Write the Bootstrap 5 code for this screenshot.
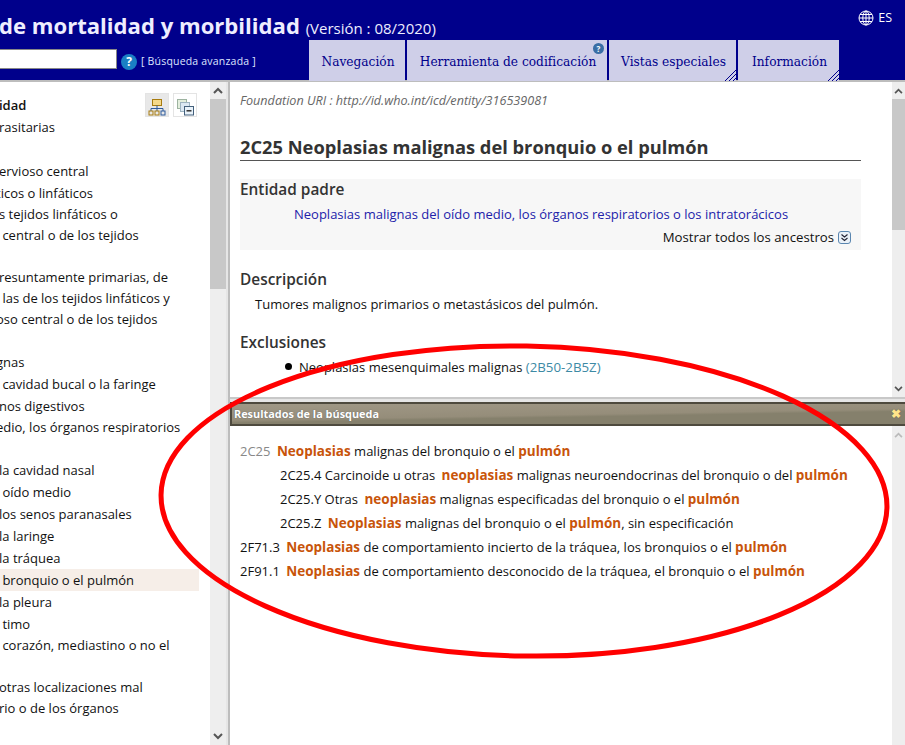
<!DOCTYPE html>
<html lang="es">
<head>
    <meta charset="UTF-8">
    <meta name="viewport" content="width=device-width, initial-scale=1.0">
    <title>CIE-11 para estadísticas de mortalidad y morbilidad</title>
    <link href="https://cdn.jsdelivr.net/npm/bootstrap@5.3.0/dist/css/bootstrap.min.css" rel="stylesheet">
    <style>
        html, body { height: 100%; overflow: hidden; }
        body { font-family: "Open Sans", "Noto Sans", sans-serif; font-size: 13px; color: #111; background: #fff; }
        .app-shell { width: 905px; height: 745px; position: relative; overflow: hidden; }

        .top-bar { height: 80px; background: #00008b; color: #fff; }
        .title-row { height: 40px; padding-top: 8px; padding-right: 13px; }
        .app-title { font-size: 22.1px; font-weight: 700; margin: 0 0 0 -1px; color: #eef; white-space: nowrap; line-height: 34px; }
        .app-version { font-size: 15px; font-weight: 400; margin-left: 0; }
        .lang-pick { font-size: 12.5px; line-height: 18px; margin-top: 1px; }
        .search-input { width: 117px; height: 20px; background: #fff; border: 1px solid #888; border-left: 0; }
        .help-dot { width: 16px; height: 16px; border-radius: 50%; background: #1a7fc4; color: #fff; font-weight: 700; font-size: 12px; line-height: 16px; text-align: center; margin: 5px 0 0 4px; }
        .adv-link { font-size: 10.5px; letter-spacing: .2px; margin: 5px 0 0 4px; color: #dfe6ff; }
        .tab-row { height: 40px; }
        .tab-item { height: 41px; background: #cfcfe8; color: #00008b; font-family: "DejaVu Serif", serif; font-size: 12.2px; position: relative; margin-right: 2px; display: flex; align-items: center; justify-content: center; padding: 3px 0 0 2px; white-space: nowrap; }
        .tab-nav { width: 96px; margin-left: 309px; }
        .tab-cod { width: 200px; }
        .tab-views { width: 127px; }
        .tab-info { width: 101px; margin-right: 0; }
        .tab-corner { position: absolute; right: 0; bottom: 0; }
        .tab-help { position: absolute; right: 3px; top: 3px; width: 11px; height: 11px; border-radius: 50%; background: #3a6ea5; color: #fff; font: 700 8px/11px "Open Sans", sans-serif; text-align: center; }

        .main-area { height: 665px; border-top: 2px solid #bdbdbd; }
        .tree-pane { width: 226px; }
        .tree-list { width: 210px; position: relative; padding-top: 12px; overflow: hidden; }
        .tree-row { height: 22px; line-height: 22px; white-space: nowrap; margin-left: -1px; }
        .tree-tight { height: 21px; }
        .tree-cut { margin-left: -4px; }
        .tree-sel { background: #f6eee8; width: 200px; }
        .tree-tools { position: absolute; left: 145px; top: 11px; }
        .tool-btn { width: 24px; height: 24px; border: 1px solid #e4e4e4; padding: 2px; display: block; }
        .tool-on { background: #e8e8e8; }
        .scroll-track { width: 16px; background: #eee; flex: none; }
        .scroll-thin { width: 13px; }
        .scroll-end { height: 17px; display: flex; align-items: center; justify-content: center; }
        .scroll-thumb { background: #c8c8c8; }
        .scroll-gap { flex: 1; }
        .split-v { width: 4px; background: #e6e6e6; border-right: 2px solid #bdbdbd; flex: none; }

        .detail-pane { height: 315px; }
        .detail-body { width: 662px; padding: 11px 0 0 10px; position: relative; overflow: hidden; }
        .found-uri { font-style: italic; color: #666; font-size: 12.6px; line-height: 16px; }
        .ent-title { font-size: 18.3px; font-weight: 700; color: #333; margin: 26px 0 0; padding-bottom: 2px; border-bottom: 1px solid #555; width: 621px; line-height: 23px; }
        .parent-box { background: #f7f7f7; width: 621px; height: 71px; margin-top: 18px; }
        .sect-head { font-size: 15.4px; font-weight: 600; color: #333; line-height: 20px; }
        .parent-box .sect-head { padding-top: 1px; }
        .parent-link { color: #2222aa; padding-left: 54px; line-height: 20px; margin-top: 4px; }
        .anc-line { line-height: 18px; margin-top: 4px; padding-right: 10px; font-size: 13.2px; }
        .desc-text { padding-left: 15px; margin-top: 4px; line-height: 20px; }
        .bullet-line { padding-left: 59px; line-height: 20px; margin-top: 4px; position: relative; }
        .bullet-line::before { content: ""; position: absolute; left: 45px; top: 6px; width: 7px; height: 7px; background: #000; border-radius: 50%; }
        .code-ref { color: #3d8aa5; font-size: 13.3px; }

        .split-h { height: 5px; background: #e6e6e6; border-top: 2px solid #c8c8c8; }
        .result-bar { height: 24px; background: linear-gradient(179deg, #a09886 0%, #958d7a 52%, #85806c 60%, #85806c 100%); border-top: 2px solid #4e4a3e; border-bottom: 2px solid #4e4a3e; border-left: 2px solid #4e4a3e; color: #fff; font-weight: 700; font-size: 10.9px; line-height: 20px; padding-left: 2px; text-shadow: 0 0 1px #555; }
        .close-x { color: #ffe58a; font-size: 12px; font-weight: 700; margin-right: 4px; }
        .result-pane { height: 319px; }
        .result-body { width: 662px; padding: 13px 0 0 10px; white-space: nowrap; }
        .res-row { line-height: 24px; height: 24px; }
        .res-sub { padding-left: 40px; }
        .res-code { margin-right: 3px; }
        .res-dim { color: #888; }
        .hit { color: #c8540a; font-weight: 700; font-size: 13.5px; }

        .oval-mark { position: absolute; left: 155px; top: 340px; pointer-events: none; }
    </style>
</head>
<body>
<div class="app-shell">
    <div class="top-bar">
        <div class="title-row d-flex justify-content-between">
            <h1 class="app-title">de mortalidad y morbilidad <span class="app-version">(Versión : 08/2020)</span></h1>
            <div class="lang-pick d-flex align-items-center gap-1 align-self-start">
                <svg width="16" height="16" viewBox="0 0 16 16" fill="none" stroke="#fff" stroke-width="1"><circle cx="8" cy="8" r="7"/><ellipse cx="8" cy="8" rx="3.2" ry="7"/><path d="M8 1v14M1 8h14M2 4.5h12M2 11.5h12"/></svg>
                <span>ES</span>
            </div>
        </div>
        <div class="tab-row d-flex position-relative">
            <div class="position-absolute top-0 start-0 d-flex align-items-center" style="height:20px;margin-top:9px">
                <div class="search-input"></div>
                <div class="help-dot">?</div>
                <div class="adv-link">[ Búsqueda avanzada ]</div>
            </div>
            <div class="tab-item tab-nav">Navegación</div>
            <div class="tab-item tab-cod">Herramienta de codificación<span class="tab-help">?</span></div>
            <div class="tab-item tab-views">Vistas especiales
                <svg class="tab-corner" width="12" height="12" viewBox="0 0 12 12" stroke="#00008b" stroke-width="1"><path d="M1 12 12 1M5 12l7-7M9 12l3-3"/></svg></div>
            <div class="tab-item tab-info">Información
                <svg class="tab-corner" width="12" height="12" viewBox="0 0 12 12" stroke="#00008b" stroke-width="1"><path d="M1 12 12 1M5 12l7-7M9 12l3-3"/></svg></div>
        </div>
    </div>

    <div class="main-area d-flex">
        <div class="tree-pane d-flex">
            <div class="tree-list">
                <div class="tree-row fw-semibold">idad</div>
                <div class="tree-row">rasitarias</div>
                <div class="tree-row">&nbsp;</div>
                <div class="tree-row">ervioso central</div>
                <div class="tree-row tree-tight tree-cut">ticos o linfáticos</div>
                <div class="tree-row tree-tight">s tejidos linfáticos o</div>
                <div class="tree-row tree-tight">&nbsp;central o de los tejidos</div>
                <div class="tree-row tree-tight">&nbsp;</div>
                <div class="tree-row tree-tight">resuntamente primarias, de</div>
                <div class="tree-row tree-tight">&nbsp;las de los tejidos linfáticos y</div>
                <div class="tree-row tree-tight tree-cut">oso central o de los tejidos</div>
                <div class="tree-row">&nbsp;</div>
                <div class="tree-row tree-cut">gnas</div>
                <div class="tree-row">&nbsp;cavidad bucal o la faringe</div>
                <div class="tree-row tree-tight">nos digestivos</div>
                <div class="tree-row tree-tight tree-cut">edio, los órganos respiratorios</div>
                <div class="tree-row">&nbsp;</div>
                <div class="tree-row">la cavidad nasal</div>
                <div class="tree-row">&nbsp;oído medio</div>
                <div class="tree-row">los senos paranasales</div>
                <div class="tree-row">la laringe</div>
                <div class="tree-row">la tráquea</div>
                <div class="tree-row tree-sel">&nbsp;bronquio o el pulmón</div>
                <div class="tree-row">la pleura</div>
                <div class="tree-row tree-tight">&nbsp;timo</div>
                <div class="tree-row tree-tight">&nbsp;corazón, mediastino o no el</div>
                <div class="tree-row tree-tight">&nbsp;</div>
                <div class="tree-row tree-tight">otras localizaciones mal</div>
                <div class="tree-row">rio o de los órganos</div>
                <div class="tree-tools d-flex gap-1">
                    <span class="tool-btn tool-on">
                        <svg width="18" height="18" viewBox="0 0 18 18" fill="none"><rect x="4.5" y="1.5" width="9" height="6" fill="#f5d98a" stroke="#a87c10"/><path d="M9 7.5v3M3 13v-2.5h12V13M9 10.5V13" stroke="#2d5a9c"/><rect x="1" y="13" width="4" height="4" stroke="#a87c10"/><rect x="7" y="13" width="4" height="4" stroke="#a87c10"/><rect x="13" y="13" width="4" height="4" stroke="#2d5a9c"/></svg>
                    </span>
                    <span class="tool-btn">
                        <svg width="18" height="18" viewBox="0 0 18 18" fill="none"><rect x="1.5" y="1.5" width="9" height="9" fill="#e3eedd" stroke="#9db3a0"/><rect x="4.5" y="4.5" width="9" height="9" fill="#dbe8f3" stroke="#9db3c0"/><rect x="8.5" y="8.5" width="9" height="8.5" fill="#e8f2fa" stroke="#44607c"/><path d="M10.5 12.8h5" stroke="#222" stroke-width="1.4"/></svg>
                    </span>
                </div>
            </div>
            <div class="scroll-track d-flex flex-column">
                <div class="scroll-end"><svg width="10" height="7" viewBox="0 0 10 7" fill="none" stroke="#555" stroke-width="2"><path d="M1 6l4-4 4 4"/></svg></div>
                <div class="scroll-thumb" style="height:190px"></div>
                <div class="scroll-gap"></div>
                <div class="scroll-end"><svg width="10" height="7" viewBox="0 0 10 7" fill="none" stroke="#555" stroke-width="2"><path d="M1 1l4 4 4-4"/></svg></div>
            </div>
        </div>
        <div class="split-v"></div>
        <div class="flex-grow-1">
            <div class="detail-pane d-flex">
                <div class="detail-body">
                    <div class="found-uri">Foundation URI : http://id.who.int/icd/entity/316539081</div>
                    <h2 class="ent-title">2C25 Neoplasias malignas del bronquio o el pulmón</h2>
                    <div class="parent-box">
                        <div class="sect-head">Entidad padre</div>
                        <div class="parent-link">Neoplasias malignas del oído medio, los órganos respiratorios o los intratorácicos</div>
                        <div class="anc-line d-flex justify-content-end align-items-center gap-1">Mostrar todos los ancestros
                            <svg width="13" height="13" viewBox="0 0 13 13" fill="#eaf1f8" stroke="#5a86b0"><rect x=".5" y=".5" width="12" height="12" rx="2.5"/><path d="M3.5 3.5l3 2.5 3-2.5M3.5 7l3 2.5 3-2.5" fill="none" stroke="#223" stroke-width="1.1"/></svg>
                        </div>
                    </div>
                    <div class="sect-head" style="margin-top:20px">Descripción</div>
                    <div class="desc-text">Tumores malignos primarios o metastásicos del pulmón.</div>
                    <div class="sect-head" style="margin-top:19px">Exclusiones</div>
                    <div class="bullet-line">Neoplasias mesenquimales malignas <span class="code-ref">(2B50-2B5Z)</span></div>
                </div>
                <div class="scroll-track scroll-thin d-flex flex-column ms-auto">
                    <div class="scroll-end"><svg width="9" height="6" viewBox="0 0 10 7" fill="none" stroke="#555" stroke-width="2"><path d="M1 6l4-4 4 4"/></svg></div>
                    <div class="scroll-thumb" style="height:131px"></div>
                    <div class="scroll-gap"></div>
                    <div class="scroll-end"><svg width="9" height="6" viewBox="0 0 10 7" fill="none" stroke="#555" stroke-width="2"><path d="M1 1l4 4 4-4"/></svg></div>
                </div>
            </div>
            <div class="split-h"></div>
            <div class="result-bar d-flex justify-content-between align-items-center">
                <span>Resultados de la búsqueda</span><span class="close-x">✖</span>
            </div>
            <div class="result-pane d-flex">
                <div class="result-body">
                    <div class="res-row"><span class="res-code res-dim">2C25</span> <span class="hit">Neoplasias</span> malignas del bronquio o el <span class="hit">pulmón</span></div>
                    <div class="res-row res-sub"><span class="res-code">2C25.4 Carcinoide u otras</span> <span class="hit">neoplasias</span> malignas neuroendocrinas del bronquio o del <span class="hit">pulmón</span></div>
                    <div class="res-row res-sub"><span class="res-code">2C25.Y Otras</span> <span class="hit">neoplasias</span> malignas especificadas del bronquio o el <span class="hit">pulmón</span></div>
                    <div class="res-row res-sub"><span class="res-code">2C25.Z</span> <span class="hit">Neoplasias</span> malignas del bronquio o el <span class="hit">pulmón</span>, sin especificación</div>
                    <div class="res-row"><span class="res-code">2F71.3</span> <span class="hit">Neoplasias</span> de comportamiento incierto de la tráquea, los bronquios o el <span class="hit">pulmón</span></div>
                    <div class="res-row"><span class="res-code">2F91.1</span> <span class="hit">Neoplasias</span> de comportamiento desconocido de la tráquea, el bronquio o el <span class="hit">pulmón</span></div>
                </div>
                <div class="scroll-track scroll-thin d-flex flex-column ms-auto">
                    <div class="scroll-end"><svg width="9" height="6" viewBox="0 0 10 7" fill="none" stroke="#bbb" stroke-width="2"><path d="M1 6l4-4 4 4"/></svg></div>
                </div>
            </div>
        </div>
    </div>

    <svg class="oval-mark" width="742" height="322" viewBox="0 0 742 322" fill="none"><ellipse cx="369" cy="161" rx="363" ry="155" stroke="#f00" stroke-width="5" transform="rotate(1 369 161)"/></svg>
</div>
<script src="https://cdn.jsdelivr.net/npm/bootstrap@5.3.0/dist/js/bootstrap.bundle.min.js"></script>
</body>
</html>
